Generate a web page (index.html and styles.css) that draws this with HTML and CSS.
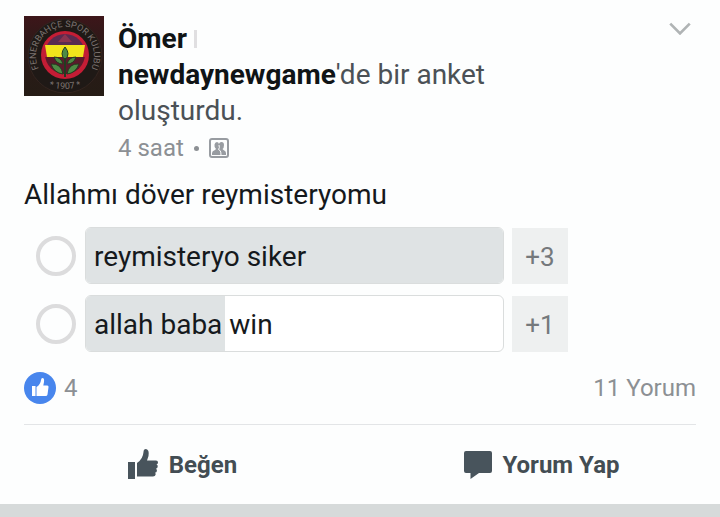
FILE: index.html
```html
<!DOCTYPE html>
<html lang="tr" dir="ltr">
  <head>
    <meta charset="utf-8">
    <meta name="viewport" content="width=device-width, initial-scale=1">
    <title>Anket</title>
    <link rel="stylesheet" href="styles.css">
  </head>

  <body>
    <article class="post">
      <header class="header">
        <svg class="avatar" viewBox="0 0 80 80" role="img" aria-label="Profil">
          <defs>
            <path id="ring" d="M20 60 A29 29 0 1 1 62 60"/>
            <path id="ringBottom" d="M22 70 Q41 76 60 70"/>
            <clipPath id="crest"><circle cx="41" cy="38" r="20"/></clipPath>
            <linearGradient id="night" x1="0" y1="0" x2="0" y2="1">
              <stop offset="0" stop-color="#3d161a"/>
              <stop offset="0.4" stop-color="#2b1a18"/>
              <stop offset="1" stop-color="#251c15"/>
            </linearGradient>
          </defs>
          <rect width="80" height="80" fill="url(#night)"/>
          <circle cx="41" cy="40" r="37" fill="#1f1916" stroke="#33241f"/>
          <circle cx="41" cy="39" r="24" fill="#c41d35"/>
          <g clip-path="url(#crest)">
            <rect x="20" y="17" width="42" height="13" fill="#592b50"/>
            <rect x="20" y="41" width="42" height="20" fill="#5b1a2b"/>
          </g>
          <path d="M21 29h40l-2 12H23z" fill="#f2e51c"/>
          <path d="M41 18l7 8H34z" fill="#8a3450"/>
          <path d="M41 31q-6 7 0 13q6-6 0-13zM27 48q10-1 12 10q-9-1-12-10zM55 48q-10-1-12 10q9-1 12-10zM30 41q7 0 9 7q-7 0-9-7zM52 41q-7 0-9 7q7 0 9-7z" fill="#4e8a45" stroke="#233c20"/>
          <path d="M41 42v19" stroke="#233c20" stroke-width="2"/>
          <text class="crest-text"><textPath href="#ring" startOffset="50%">FENERBAHÇE SPOR KULUBU</textPath></text>
          <text class="crest-text"><textPath href="#ringBottom" startOffset="50%">* 1907 *</textPath></text>
        </svg>
        <div class="byline">
          <p class="story"><a href="#">Ömer <span class="erased"></span></a><br><a href="#">newdaynewgame</a>'de bir anket oluşturdu.</p>
          <p class="meta">
            4 saat <span class="dot"></span>
            <svg class="group-icon" viewBox="0 0 20 20" role="img" aria-label="Grup">
              <rect x="1" y="1" width="18" height="18" rx="2" fill="none" stroke="#989ca1" stroke-width="2"/>
              <path d="M3 17v-2q0-2 3-3l1-1q-2-2-1.500-4.500Q6 4 8 4t2 2.500Q10 4 12.500 4T15 7q0 3-1.500 4l1 1q2.500 1 2.500 3v2z" fill="#989ca1"/>
              <path d="M10 7q1 3-.500 4.500l1.500 1Q12 13.500 12 17" fill="none" stroke="#fdfefe"/>
            </svg>
          </p>
        </div>
        <button type="button" class="menu" aria-label="Seçenekler">
          <svg class="chevron" viewBox="0 0 20 12"><path d="M1 1.500l9 9 9-9" fill="none" stroke="#b0b4b5" stroke-width="2.500"/></svg>
        </button>
      </header>

      <form class="poll">
        <h1 class="question">Allahmı döver reymisteryomu</h1>
        <div class="option">
          <input type="radio" class="radio" name="vote" id="vote1">
          <label class="bar" for="vote1">
            <span class="fill" style="width: 100%"></span>
            <span class="answer">reymisteryo siker</span>
          </label>
          <button type="button" class="voters">+3</button>
        </div>
        <div class="option">
          <input type="radio" class="radio" name="vote" id="vote2">
          <label class="bar" for="vote2">
            <span class="fill" style="width: 33.300%"></span>
            <span class="answer">allah baba win</span>
          </label>
          <button type="button" class="voters">+1</button>
        </div>
      </form>

      <div class="feedback">
        <svg class="like-badge" viewBox="0 0 32 32" aria-hidden="true">
          <circle cx="16" cy="16" r="16" fill="#4886ed"/>
          <path d="M8 14h3.500v10H8zM12.500 15q4-2.500 4.500-7 .200-2 1.500-2 2 .200 1.500 4l-.700 3.500h4q1.500 0 1.200 1.700l-1 7.300q-.200 1.500-2 1.500h-9z" fill="#fff"/>
        </svg>
        <span>4</span>
        <a class="comments" href="#">11 Yorum</a>
      </div>

      <div class="actions">
        <button type="button" class="action">
          <svg class="action-icon" viewBox="0 0 32 32" aria-hidden="true">
            <path d="M1 13h7v17H1zM10 14q6-4 6.500-11Q16.500 0 19 0q3.500.500 2.500 7l-1.500 4.500h9q2 0 2 2 0 1.500-1.500 2 1.500.500 1.200 2.300-.200 1.500-1.700 2 1.200.700.900 2.200-.300 1.500-1.900 1.800.900.700.600 2-.400 1.700-2.600 1.700H10z" fill="#48545c"/>
          </svg>
          Beğen
        </button>
        <button type="button" class="action">
          <svg class="action-icon comment-icon" viewBox="0 0 28 28" aria-hidden="true">
            <path d="M2 0h24q2 0 2 2v18q0 2-2 2H15l-8.500 6v-6H2q-2 0-2-2V2q0-2 2-2z" fill="#48545c"/>
          </svg>
          Yorum Yap
        </button>
      </div>
    </article>
  </body>
</html>
```
FILE: styles.css
```css
*{
  padding: 0px;
  margin: 0px;
  box-sizing: border-box;
}

:root{
  --dark: #15191c;
  --text: #4b5156;
  --muted: #8c9094;
  --slate: #434d53;
  --fill: #dfe3e4;
  --border: #dadddd;
}

body{
  background-color: #d6dada;
  font-family: Roboto, sans-serif;
  font-size: 28px;
  color: var(--dark);
}

a{
  color: inherit;
  text-decoration: none;
}

button{
  font-family: inherit;
  border: none;
  background: none;
  cursor: pointer;
}

.post{
  background-color: #fdfefe;
}

.header{
  display: flex;
  align-items: flex-start;
  padding: 16px 24px 0px 24px;
}

.avatar{
  flex: none;
  width: 80px;
  height: 80px;
  margin-right: 14px;
}

.crest-text{
  font-size: 9px;
  text-anchor: middle;
  fill: #7d7470;
}

.byline{
  flex: 1;
  padding-top: 5px;
}

.story{
  max-width: 400px;
  line-height: 36px;
  color: var(--text);
}

.story a{
  font-weight: bold;
  color: #101416;
}

/* what is left of the surname */
.erased{
  display: inline-block;
  width: 3px;
  height: 18px;
  background-color: #e0dfe1;
}

.meta{
  display: flex;
  align-items: center;
  gap: 10px;
  line-height: 38px;
  font-size: 24px;
  color: var(--muted);
}

.dot{
  width: 5px;
  height: 5px;
  border-radius: 50%;
  background-color: var(--muted);
}

.group-icon{
  width: 20px;
  height: 20px;
}

.menu{
  padding: 6px 5px;
}

.chevron{
  display: block;
  width: 22px;
  height: 13px;
}

.poll{
  display: flex;
  flex-direction: column;
  gap: 11px;
  padding: 10px 152px 0px 24px;
}

.question{
  margin-bottom: 3px;
  font-size: 28px;
  font-weight: normal;
  line-height: 36px;
  white-space: nowrap;
}

.option{
  display: flex;
  align-items: center;
  padding-left: 12px;
}

.radio{
  appearance: none;
  flex: none;
  width: 40px;
  height: 40px;
  margin-right: 9px;
  border: 4px solid #dcdcdd;
  border-radius: 50%;
}

.radio:checked{
  background-color: #4886ed;
}

.bar{
  flex: 1;
  display: grid;
  border: 1px solid var(--border);
  border-radius: 6px;
  overflow: hidden;
  background-color: #fff;
}

.fill, .answer{
  grid-area: 1 / 1;
}

.fill{
  background-color: var(--fill);
}

.answer{
  padding: 2px 8px 0px 8px;
  line-height: 53px;
}

.voters{
  width: 56px;
  height: 56px;
  margin-left: 8px;
  padding-top: 2px;
  background-color: #eef0f0;
  font-size: 26px;
  color: #75797c;
}

.feedback{
  display: flex;
  align-items: center;
  gap: 8px;
  margin: 0px 24px;
  padding: 18px 0px;
  border-bottom: 1px solid #e3e5e7;
  line-height: 36px;
  font-size: 24px;
  color: var(--muted);
}

.like-badge{
  width: 32px;
  height: 32px;
}

.comments{
  margin-left: auto;
}

.actions{
  display: grid;
  grid-template-columns: 1fr 1fr;
}

.action{
  display: flex;
  align-items: center;
  justify-content: center;
  gap: 10px;
  height: 79px;
  padding-left: 4px;
  font-size: 24px;
  font-weight: bold;
  color: var(--slate);
}

.action-icon{
  width: 32px;
  height: 32px;
}

.comment-icon{
  width: 28px;
  height: 28px;
}
```
